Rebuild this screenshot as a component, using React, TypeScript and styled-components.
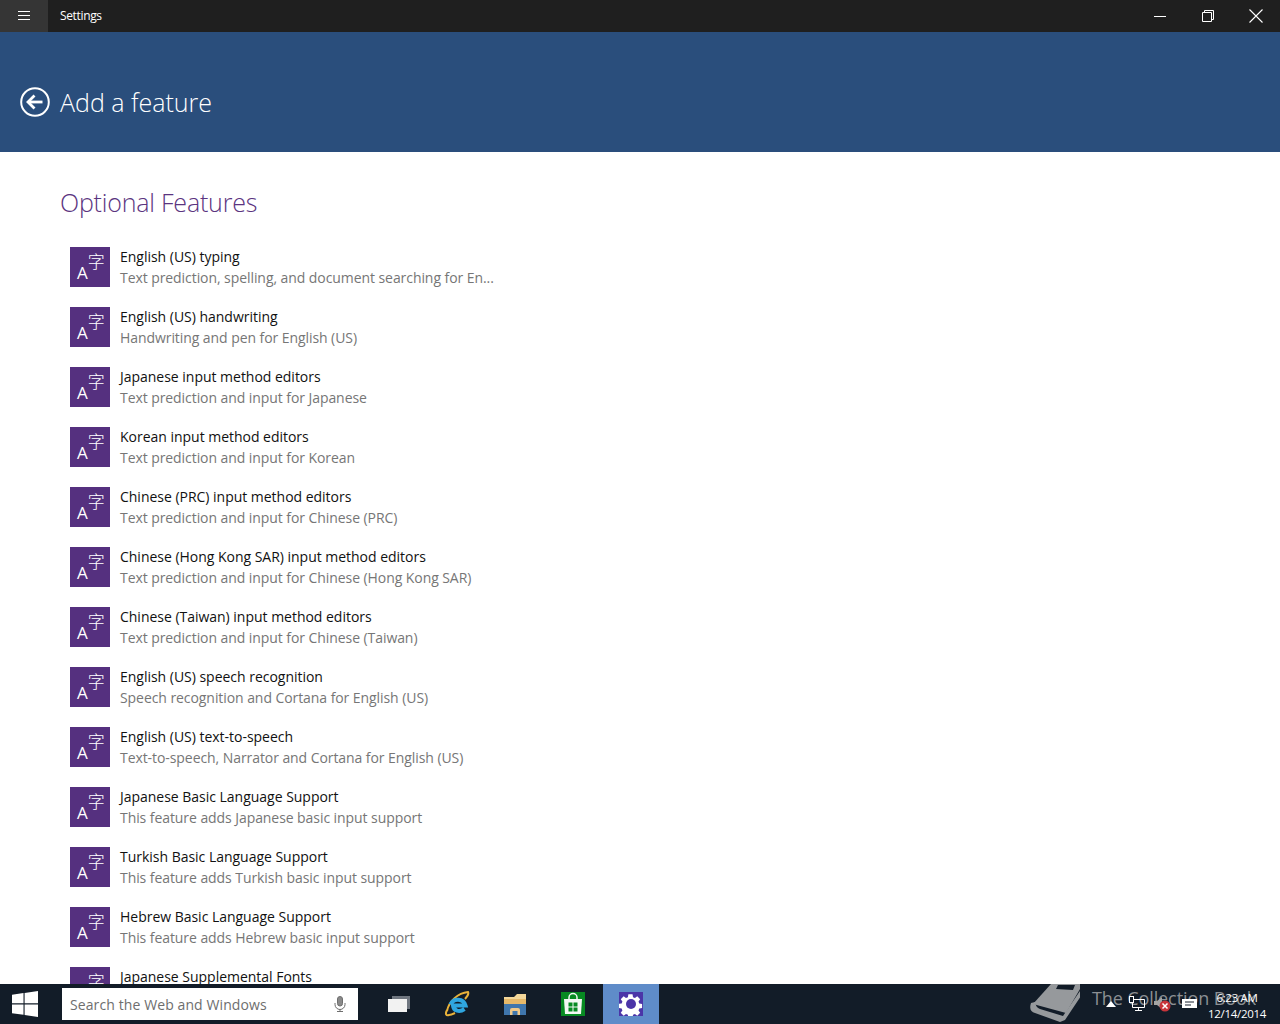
import { FC } from "react";
import styled, { createGlobalStyle } from "styled-components";

type Feature = {
  name: string;
  detail?: string;
};

const features: Feature[] = [
  { name: "English (US) typing", detail: "Text prediction, spelling, and document searching for En..." },
  { name: "English (US) handwriting", detail: "Handwriting and pen for English (US)" },
  { name: "Japanese input method editors", detail: "Text prediction and input for Japanese" },
  { name: "Korean input method editors", detail: "Text prediction and input for Korean" },
  { name: "Chinese (PRC) input method editors", detail: "Text prediction and input for Chinese (PRC)" },
  { name: "Chinese (Hong Kong SAR) input method editors", detail: "Text prediction and input for Chinese (Hong Kong SAR)" },
  { name: "Chinese (Taiwan) input method editors", detail: "Text prediction and input for Chinese (Taiwan)" },
  { name: "English (US) speech recognition", detail: "Speech recognition and Cortana for English (US)" },
  { name: "English (US) text-to-speech", detail: "Text-to-speech, Narrator and Cortana for English (US)" },
  { name: "Japanese Basic Language Support", detail: "This feature adds Japanese basic input support" },
  { name: "Turkish Basic Language Support", detail: "This feature adds Turkish basic input support" },
  { name: "Hebrew Basic Language Support", detail: "This feature adds Hebrew basic input support" },
  { name: "Japanese Supplemental Fonts" },
];

const App: FC = () => (
  <Screen>
    <GlobalStyle />
    <TitleBar>
      <MenuButton>
        <svg width="12" height="10" viewBox="0 0 12 10">
          <path d="M0 .5h12M0 4.500h12M0 8.500h12" stroke="#fff" />
        </svg>
      </MenuButton>
      <AppName>Settings</AppName>
      <WindowButtons>
        <WindowButton>
          <svg width="12" height="12" viewBox="0 0 12 12">
            <path d="M0 6.500h12" stroke="#fff" />
          </svg>
        </WindowButton>
        <WindowButton>
          <svg width="12" height="12" viewBox="0 0 12 12" fill="none">
            <path d="M.5 2.500h9v9h-9zM2.500 2.500v-2h9v9h-2" stroke="#fff" />
          </svg>
        </WindowButton>
        <WindowButton>
          <svg width="14" height="14" viewBox="0 0 14 14">
            <path d="M.5.5l13 13M13.500.5l-13 13" stroke="#fff" strokeWidth="1.1" />
          </svg>
        </WindowButton>
      </WindowButtons>
    </TitleBar>

    <Header>
      <svg width="30" height="30" viewBox="0 0 30 30" fill="none">
        <circle cx="15" cy="15" r="13.8" stroke="#fff" strokeWidth="2" />
        <path d="M8 15h14.500" stroke="#fff" strokeWidth="2.8" />
        <path d="M14.500 8.500L8 15l6.500 6.500" stroke="#fff" strokeWidth="2.8" />
      </svg>
      <PageTitle>Add a feature</PageTitle>
    </Header>

    <Main>
      <Heading>Optional Features</Heading>
      <List>
        {features.map(({ name, detail }) => (
          <Row key={name}>
            <FeatureIcon>
              <Latin>A</Latin>
              <Han>字</Han>
            </FeatureIcon>
            <RowText>
              <Name>{name}</Name>
              {detail && <Detail>{detail}</Detail>}
            </RowText>
          </Row>
        ))}
      </List>
    </Main>

    <Taskbar>
      <StartButton>
        <svg width="26" height="26" viewBox="0 0 26 26" fill="#fff">
          <path d="M0 3.800L11.500 2.100V12.300H0zM12.600 2L26 0V12.300H12.600zM0 13.500H11.500V23.800L0 22.200zM12.600 13.500H26V26L12.600 24z" />
        </svg>
      </StartButton>
      <SearchBox>
        <SearchText>Search the Web and Windows</SearchText>
        <svg width="12" height="16" viewBox="0 0 12 16" fill="none" stroke="#6e6e6e">
          <rect x="3.500" y="0.500" width="5" height="9.500" rx="2.500" fill="#8a8a8a" />
          <path d="M1 7v1.500a5 5 0 0 0 10 0V7M6 13.500v2M3 15.500h6" />
        </svg>
      </SearchBox>
      <TaskIcons>
        <TaskIcon>
          <svg width="24" height="18" viewBox="0 0 24 18">
            <rect x="5" y="1" width="18" height="13" fill="#6f7680" />
            <rect x="1" y="4" width="19" height="13" fill="#f2f2f2" />
          </svg>
        </TaskIcon>
        <TaskIcon>
          <svg width="26" height="26" viewBox="0 0 26 26" fill="none">
            <path d="M3 20C5 10 14 2 24 1c1 2-1 5-3 7" stroke="#e8b23a" strokeWidth="2" />
            <path d="M3 19c-2 4-1 6 2 5 2 0 4-1 6-2" stroke="#e8b23a" strokeWidth="2" />
            <path d="M6.500 13.500a8 8 0 0 1 15 1H9c.5 5.500 6.500 7 11.500 3.500" stroke="#2fa6e0" strokeWidth="4" />
          </svg>
        </TaskIcon>
        <TaskIcon>
          <svg width="24" height="24" viewBox="0 0 24 24">
            <path d="M1 5h10l3-3h9v6H1z" fill="#f3d79a" />
            <rect x="1" y="7" width="22" height="16" fill="#e5b869" />
            <rect x="1" y="12" width="22" height="11" fill="#3f76ad" />
            <path d="M7 23v-5a2 2 0 0 1 2-2h6a2 2 0 0 1 2 2v5h-2.500v-4h-5v4z" fill="#f0c98a" />
          </svg>
        </TaskIcon>
        <TaskIcon>
          <svg width="24" height="24" viewBox="0 0 24 24">
            <rect width="24" height="24" fill="#078a22" />
            <path d="M8 7V5.500a4 4 0 0 1 8 0V7" fill="none" stroke="#f4f8f4" strokeWidth="1.500" />
            <path d="M3 7h18l-1 15H4z" fill="#f4f8f4" />
            <path d="M7.500 10.500h4v4h-4zM12.500 10.500h4v4h-4zM7.500 15.500h4v4h-4zM12.500 15.500h4v4h-4z" fill="#078a22" />
          </svg>
        </TaskIcon>
        <ActiveTaskIcon>
          <svg width="24" height="24" viewBox="0 0 24 24">
            <rect width="24" height="24" fill="#4b35a8" />
            <path
              fill="#fff"
              d="M9.500 1.500h5l.6 3.400 2.300.9 2.800-2 3.500 3.500-2 2.800.9 2.300 3.400.6v5l-3.400.6-.9 2.300 2 2.800-3.500 3.500-2.800-2-2.300.9-.6 3.400h-5l-.6-3.400-2.300-.9-2.800 2-3.500-3.500 2-2.800-.9-2.300-3.400-.6v-5l3.400-.6.9-2.300-2-2.800 3.500-3.500 2.800 2 2.300-.9z"
              transform="translate(1.500 1.100) scale(.83)"
            />
            <circle cx="12" cy="12" r="5" fill="#4b35a8" />
          </svg>
        </ActiveTaskIcon>
      </TaskIcons>
      <Tray>
        <Watermark>
          <svg width="50" height="40" viewBox="0 0 50 40" fill="#96999c">
            <path d="M3 20L21 0h29v5L36 29z" />
            <path d="M28 1h17l-2 5-17-1z" fill="#121c28" />
            <path d="M1 19c-2 6 0 9 4 10l25 9 5-2L53 9l-3-2L33 32 10 25c-3-1-4-3-5-7z" />
          </svg>
          <WatermarkText>The Collection Book</WatermarkText>
        </Watermark>
        <TrayIcons>
          <TraySlot>
            <svg width="10" height="6" viewBox="0 0 10 6">
              <path d="M5 0l5 6H0z" fill="#fff" />
            </svg>
          </TraySlot>
          <TraySlot>
            <svg width="16" height="16" viewBox="0 0 16 16" fill="none" stroke="#fff">
              <path d="M3.500 3.500h12v8h-12zM9.500 11.500v3M6 14.500h7" />
              <rect x="0.500" y="0.500" width="4" height="6" fill="#121c28" />
            </svg>
          </TraySlot>
          <TraySlot>
            <svg width="18" height="16" viewBox="0 0 18 16">
              <path d="M0 5h3l5-4v12l-5-4H0z" fill="#a4a4a4" />
              <circle cx="11" cy="10" r="5.500" fill="#c8343a" />
              <path d="M8.500 7.500l5 5M13.500 7.500l-5 5" stroke="#fff" strokeWidth="1.500" />
            </svg>
          </TraySlot>
          <TraySlot>
            <svg width="15" height="10" viewBox="0 0 15 10">
              <path d="M0 0h15v9H0z" fill="#fff" />
              <path d="M3 3h9M3 6h6" stroke="#1a2330" />
            </svg>
          </TraySlot>
        </TrayIcons>
        <Clock>
          <span>6:23 AM</span>
          <span>12/14/2014</span>
        </Clock>
      </Tray>
    </Taskbar>
  </Screen>
);

export default App;

const GlobalStyle = createGlobalStyle`
  html, body {
    margin: 0;
    padding: 0;
    background: #fff;
  }
`;

const Screen = styled.div`
  width: 1280px;
  height: 1024px;
  display: flex;
  flex-direction: column;
  overflow: hidden;
  font-family: "Open Sans", "Noto Sans", sans-serif;
`;

const TitleBar = styled.div`
  height: 32px;
  flex: none;
  display: flex;
  align-items: center;
  background: #1f1f1f;
  color: #fff;
`;

const MenuButton = styled.div`
  width: 48px;
  height: 32px;
  display: flex;
  align-items: center;
  justify-content: center;
  background: #353535;
`;

const AppName = styled.div`
  margin: -1px 0 0 12px;
  font-size: 12px;
  letter-spacing: -0.35px;
`;

const WindowButtons = styled.div`
  margin-left: auto;
  display: flex;
`;

const WindowButton = styled.div`
  width: 48px;
  height: 32px;
  display: flex;
  align-items: center;
  justify-content: center;
`;

const Header = styled.div`
  height: 120px;
  flex: none;
  box-sizing: border-box;
  padding: 55px 0 0 20px;
  display: flex;
  align-items: flex-start;
  gap: 10px;
  background: #2a4e7c;
`;

const PageTitle = styled.div`
  color: #fff;
  font-weight: 300;
  font-size: 25px;
  line-height: 30px;
`;

const Main = styled.div`
  flex: 1;
  min-height: 0;
  overflow: hidden;
  padding: 33px 0 0 60px;
`;

const Heading = styled.div`
  color: #5b3480;
  font-weight: 300;
  font-size: 25px;
  letter-spacing: -0.2px;
  line-height: 34px;
`;

const List = styled.div`
  margin-top: 28px;
  display: flex;
  flex-direction: column;
  gap: 20px;
`;

const Row = styled.div`
  height: 40px;
  margin-left: 10px;
  display: flex;
  gap: 10px;
`;

const FeatureIcon = styled.div`
  width: 40px;
  height: 40px;
  flex: none;
  box-sizing: border-box;
  padding: 5px 7px 7px 7px;
  display: flex;
  justify-content: space-between;
  background: #55307f;
  color: #fff;
`;

const Latin = styled.span`
  align-self: flex-end;
  font-size: 17px;
  line-height: 15px;
`;

const Han = styled.span`
  font-family: "Noto Sans CJK SC", sans-serif;
  font-size: 17px;
  font-weight: 300;
  line-height: 17px;
`;

const RowText = styled.div`
  display: flex;
  flex-direction: column;
  white-space: nowrap;
`;

const Name = styled.div`
  color: #111;
  font-size: 14px;
  letter-spacing: -0.02px;
  line-height: 20px;
`;

const Detail = styled.div`
  margin-top: 1px;
  color: #767676;
  font-size: 14px;
  letter-spacing: -0.07px;
  line-height: 20px;
`;

const Taskbar = styled.div`
  position: relative;
  height: 40px;
  flex: none;
  display: flex;
  align-items: stretch;
  background: #121c28;
`;

const StartButton = styled.div`
  width: 50px;
  display: flex;
  align-items: center;
  justify-content: center;
`;

const SearchBox = styled.div`
  width: 296px;
  height: 32px;
  margin: 4px 0 0 12px;
  box-sizing: border-box;
  padding: 0 12px 0 8px;
  display: flex;
  align-items: center;
  justify-content: space-between;
  background: #fff;
`;

const SearchText = styled.span`
  color: #6e6e6e;
  font-size: 14px;
  letter-spacing: 0.1px;
`;

const TaskIcons = styled.div`
  margin-left: 12px;
  display: flex;
`;

const TaskIcon = styled.div`
  width: 58px;
  display: flex;
  align-items: center;
  justify-content: center;
`;

const ActiveTaskIcon = styled(TaskIcon)`
  width: 56px;
  margin-left: 1px;
  background: #5f8cc9;
`;

const Tray = styled.div`
  flex: 1;
  display: flex;
  align-items: center;
  justify-content: flex-end;
  padding-right: 14px;
  gap: 6px;
`;

const Watermark = styled.div`
  position: absolute;
  right: 24px;
  top: 0;
  height: 40px;
  display: flex;
  gap: 12px;
  overflow: hidden;
`;

const WatermarkText = styled.span`
  color: #8b8f93;
  font-size: 18px;
  letter-spacing: -0.1px;
  line-height: 29px;
`;

const TrayIcons = styled.div`
  position: relative;
  display: flex;
  align-items: center;
`;

const TraySlot = styled.div`
  width: 26px;
  display: flex;
  justify-content: center;
`;

const Clock = styled.div`
  position: relative;
  width: 58px;
  margin-top: 4px;
  display: flex;
  flex-direction: column;
  align-items: center;
  white-space: nowrap;
  color: #fff;
  font-size: 11.5px;
  letter-spacing: -0.3px;
  line-height: 16px;
`;
